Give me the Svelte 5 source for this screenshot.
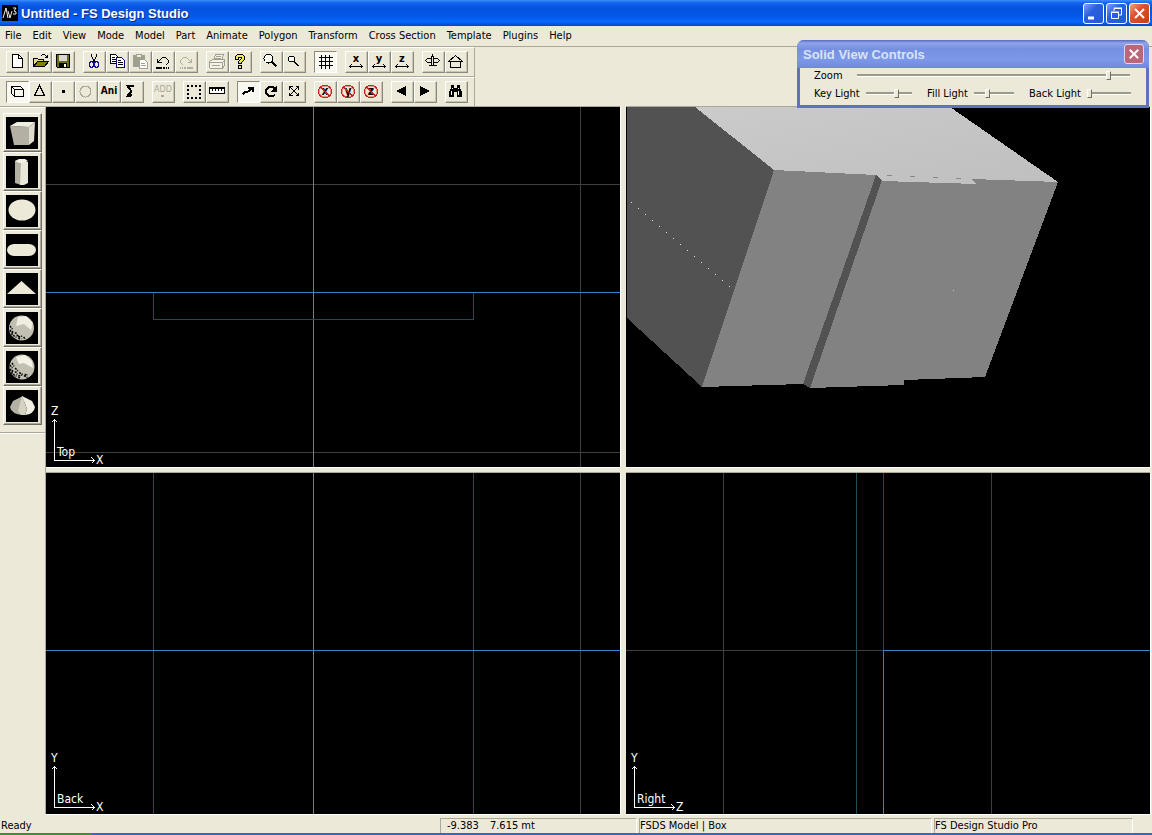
<script>
    const menus = ['File', 'Edit', 'View', 'Mode', 'Model', 'Part', 'Animate', 'Polygon', 'Transform', 'Cross Section', 'Template', 'Plugins', 'Help'];

    // body of each 21x20 toolbar icon
    const axis = (letter) => `<text x="10" y="10" text-anchor="middle" font-size="11" font-weight="bold">${letter}</text>
        <path d="M3.5 14.5H16.5M5.5 12.5L3.5 14.5L5.5 16.5M14.5 12.5L16.5 14.5L14.5 16.5"/>`;
    const lock = (letter) => `<g stroke="#e89890" stroke-width="2"><circle cx="10" cy="9.5" r="6"/></g>
        <text x="10" y="13" text-anchor="middle" font-size="12" font-weight="bold">${letter}</text>
        <g stroke="#c82020"><circle cx="10" cy="9.5" r="6.5"/><path d="M5.5 5L14.5 14"/></g>`;

    const icons = {
        new: '<path fill="#fff" d="M5.5 2.5H11.5L15.5 6.5V15.5H5.5Z"/><path d="M11.5 2.5V6.5H15.5"/>',
        open: '<path fill="#e8e080" d="M3.5 14.5V6.5H7.5L8.5 7.5H13.5V9.5"/><path fill="#808000" d="M3.5 14.5L7.5 9.5H18.5L14.5 14.5Z"/><path d="M10.5 4.5L12.5 2.5H14.5L17.5 5.5M17.5 2.5V5.5H14.5"/>',
        save: '<path fill="#6b6b18" d="M3.5 2.5H16.5V15.5H4.5L3.5 14.5Z"/><path fill="#d8d8cc" stroke="none" d="M6 3H14V9H6Z"/><path fill="#000" stroke="none" d="M6 11H14V16H6Z"/><path fill="#fff" stroke="none" d="M11 12H13V15H11Z"/>',
        cut: '<path d="M7.5 1.5V4.5L11.5 10.5M12.5 1.5V4.5L8.5 10.5"/><g stroke="#101090"><ellipse cx="7.5" cy="12.5" rx="2" ry="3"/><ellipse cx="12.5" cy="12.5" rx="2" ry="3"/></g>',
        copy: '<path fill="#fff" d="M3.5 2.5H8.5L10.5 4.5V11.5H3.5Z"/><path d="M5 5.5H8M5 7.5H9M5 9.5H9"/><path fill="#fff" stroke="#101070" d="M9.5 5.5H14.5L17.5 8.5V15.5H9.5Z"/><path d="M11 8.5H14M11 10.5H16M11 12.5H16"/>',
        paste: '<g stroke="#a09f90"><path fill="#a09f90" d="M3.5 3.5H14.5V14.5H3.5Z"/><path fill="#ece9d8" d="M6.5 2.5H11.5V5.5H6.5Z"/><path fill="#fff" d="M9.5 7.5H14.5L17.5 10.5V16.5H9.5Z"/><path d="M11 11.5H15M11 13.5H16"/></g>',
        undo: '<path d="M4.5 10.5L8.5 6.5L9.5 5.5H12.5L15.5 8.5V10.5L12.5 13.5M4.5 6.5V10.5H8.5" /><path stroke-width="2" d="M3 16H9M10 16H12M13 16H14M15 16H16"/>',
        redo: '<g stroke="#b0ae9e"><path d="M15.5 10.5L11.5 6.5L10.5 5.5H7.5L4.5 8.5V10.5L7.5 13.5M15.5 6.5V10.5H11.5"/><path stroke-width="2" d="M4 16H5M6 16H7M8 16H10M11 16H17"/></g>',
        print: '<g stroke="#a09f90" fill="#f4f2e6"><path d="M6.5 8.5L8.5 2.5H16.5L14.5 8.5"/><path d="M2.5 9.5L5.5 7.5H17.5V13.5L15.5 16.5H3.5L2.5 15.5Z"/><path d="M2.5 10.5H15.5V16M15.5 10.5L17.5 8.5M9 4.5H14M8 6.5H14M5 13.5H13"/></g>',
        help: '<path fill="#f0e850" d="M5.500 7.500V4.500L7.500 2.500H12.500L14.500 4.500V7.500L11.500 10.500V11.500H8.500V9.500L11.500 6.500V5.500H8.500V7.500Z"/><path fill="#f0e850" d="M8.500 13.500H11.500V16.500H8.500Z"/>',
        zoomIn: '<circle cx="7.500" cy="6.500" r="4.500" fill="#fbfaf2"/><path stroke-width="2" d="M11 10L15.500 14.500"/>',
        zoomOut: '<circle cx="7.500" cy="7" r="3" fill="#fbfaf2"/><path stroke-width="2" d="M10 9.500L14.500 14"/>',
        grid: '<path d="M6.500 3V17M10.500 3V17M14.500 3V17M4 5.500H18M4 9.500H18M4 13.500H18"/>',
        sizeX: axis('x'),
        sizeY: axis('y'),
        sizeZ: axis('z'),
        plane: '<path d="M8.500 4.500H10.500V13.500H8.500ZM9.500 2V5M8.500 6.500H4.500L2.500 8.500L4.500 10.500H8.500M10.500 6.500H14.500L16.500 8.500L14.500 10.500H10.500M5.500 13.500H13.500"/>',
        home: '<path d="M2.500 9.500L9.500 3.500L16.500 9.500ZM4.500 9.500V15.500H14.500V9.500"/>',
        box: '<path d="M4.500 4.500H13.500L16.500 7.500V14.500H7.500L4.500 11.500ZM4.500 4.500L7.500 7.500H16.500M7.500 7.500V14.500"/>',
        triangle: '<path d="M9.500 3.500L14.500 13.500H4.500Z"/>',
        point: '<path fill="#000" stroke="none" d="M9 8H12V11H9Z"/>',
        circle: '<circle cx="9.500" cy="9.500" r="5.500" stroke="#aaa998"/>',
        ani: '<text x="10" y="12" text-anchor="middle" font-size="10" font-weight="bold">Ani</text>',
        sigma: '<path stroke-width="2" d="M11 5V4H5.500L9 8.500V10L5.500 14H8L10 12.500"/>',
        add: '<g class="off"><text x="10" y="10" text-anchor="middle" font-size="9">ADD</text><path fill="#aaa998" stroke="none" d="M8 13H11V15H8Z"/></g>',
        marquee: '<path stroke-width="2" stroke-dasharray="2 2" d="M3 4H17M3 16H17M4 7V15M16 7V15"/>',
        ruler: '<path fill="#fff" d="M2.500 5.500H17.500V11.500H2.500Z"/><path d="M2 6.500H18M5.500 6V9M8.500 6V9M11.500 6V9M14.500 6V9"/>',
        move: '<path stroke-width="2" d="M4.500 12L8 9.500H10L14 7"/><path stroke-width="2" d="M10 6H15V10"/>',
        rotate: '<path stroke-width="2" d="M14 13L12 14H8L5 11V8L8 5H12L14 7"/><path fill="#000" d="M15.500 4.500V9.500H10.500Z"/>',
        scale: '<path d="M5.500 4.500L14.500 13.500M14.500 4.500L5.500 13.500M5.500 7.500V4.500H8.500M11.500 4.500H14.500V7.500M14.500 10.500V13.500H11.500M8.500 13.500H5.500V10.500"/>',
        lockX: lock('x'),
        lockY: lock('y'),
        lockZ: lock('z'),
        prev: '<path fill="#000" stroke="none" d="M4 9L14 4V14Z"/>',
        next: '<path fill="#000" stroke="none" d="M15 9L5 4V14Z"/>',
        find: '<path fill="#000" stroke="none" d="M5 3H8V6H11V3H14V6L16 10V15H11V10H8V15H3V10L5 6Z"/><path stroke="#fff" d="M5.500 9V13M12.500 9V13M6.500 6V7M12.500 6V7"/>'
    };

    const toolbars = [
        [['new', 'open', 'save'], ['cut', 'copy', 'paste', 'undo', 'redo'], ['print', 'help'], ['zoomIn', 'zoomOut'], ['grid'], ['sizeX', 'sizeY', 'sizeZ'], ['plane', 'home']],
        [['box', 'triangle', 'point', 'circle', 'ani', 'sigma'], ['add'], ['marquee', 'ruler'], ['move', 'rotate', 'scale'], ['lockX', 'lockY', 'lockZ'], ['prev', 'next'], ['find']]
    ];
    const pressed = ['grid', 'box', 'move'];
    const disabled = ['paste', 'redo', 'print', 'circle', 'add'];

    const shapes = [
        { name: 'Box', art: '<path fill="#b4b1a4" d="M4 9L23 10V28H8Z"/><path fill="#f0eee0" d="M4 9L11 5H29L23 10Z"/><path fill="#dedccc" d="M23 10L29 5L28 24L23 28Z"/>' },
        { name: 'Cylinder', art: '<path fill="#b4b1a4" d="M9 5L15 3V29L9 27Z"/><path fill="#eae8d8" d="M15 6H22V27L18 29H14Z"/><path fill="#f4f2e6" d="M9 5L13 3H19L22 5L18 7H13Z"/>' },
        { name: 'Sphere', art: '<ellipse fill="#ece9d8" cx="16" cy="15" rx="13.500" ry="10.500"/>' },
        { name: 'Tube', art: '<rect fill="#ece9d8" x="1" y="10" width="29" height="12" rx="7"/>' },
        { name: 'Pyramid', art: '<path fill="#ece9d8" d="M1 21L15.500 8L30 21Z"/>' },
        { name: 'Geosphere', art: '<circle fill="#c2c0b2" cx="15.500" cy="16" r="12.500"/><path fill="#f0eee0" d="M12 5L20 4L27 11L25 18L18 12L10 14Z"/><path stroke="#000" stroke-width="1.500" stroke-dasharray="2 1 1 2" fill="none" d="M4 14L7 18L6 22L10 21L12 25L17 24L19 27M4 18L8 24L14 27M11 23L16 27"/>' },
        { name: 'Hemisphere', art: '<circle fill="#c2c0b2" cx="16" cy="16" r="12.500"/><path fill="#f4f2e6" d="M10 6L19 4L26 10L27 17L18 12L13 13Z"/><path stroke="#000" stroke-width="1.500" stroke-dasharray="2 1 1 2" fill="none" d="M4 14L7 18L6 22L10 21L12 25L17 24L22 27M4 18L8 24L14 27M6 12L9 17L15 23L22 24"/>' },
        { name: 'Cone', art: '<path fill="#b4b1a4" d="M17 6L7 11L4 17Q5 24 17 25L19 20Z"/><path fill="#f0eee0" d="M16 6L26 11L29 17Q28 24 19 25L21 19Z"/><path fill="#d4d2c2" d="M16 6L21 19L19 25H15L12 21Z"/>' }
    ];

    const dots = Array.from({ length: 15 }, (_, i) => ({ x: 5 + i * 7, y: 95 + i * 6 }));

    let lights = $state([
        { name: 'Key Light', value: 68 },
        { name: 'Fill Light', value: 32 },
        { name: 'Back Light', value: 0 }
    ]);
    let zoom = $state(93);
</script>

{#snippet gizmo(label, up, across)}
    <svg class="gizmo" viewBox="0 0 60 64" width="60" height="64" shape-rendering="crispEdges">
        <path d="M5.500 57.500V16.500M2.500 19.500L5.500 16.500L8.500 19.500M5.500 57.500H45.500M42.500 54.500L45.500 57.500L42.500 60.500" />
        <text x="2" y="12">{up}</text>
        <text x="8" y="53">{label}</text>
        <text x="47" y="61">{across}</text>
    </svg>
{/snippet}

<div class="window">
    <header class="titlebar">
        <svg class="logo" viewBox="0 0 16 16" width="16" height="16">
            <rect width="16" height="16" fill="#000" />
            <path d="M1 13L4 3L6 13M6 6L8 13L10 6M11 3H14L12 6L14 7V9H11" stroke="#eee" fill="none" />
        </svg>
        <h1>Untitled - FS Design Studio</h1>
        <div class="caption">
            <button aria-label="Minimize"><svg viewBox="0 0 19 19"><path d="M4 14H10" stroke-width="3" /></svg></button>
            <button aria-label="Restore"><svg viewBox="0 0 19 19"><path d="M7 7V4.500H14.500V11H12M4.500 8.500H11.500V14.500H4.500ZM4 8H12M7 4H15" /></svg></button>
            <button class="close" aria-label="Close"><svg viewBox="0 0 19 19"><path d="M5 5L14 14M14 5L5 14" stroke-width="2" /></svg></button>
        </div>
    </header>

    <nav class="menubar">
        {#each menus as menu}
            <button>{menu}</button>
        {/each}
    </nav>

    {#each toolbars as groups}
        <div class="toolbar">
            {#each groups as group}
                <div class="group">
                    {#each group as name}
                        <button class:pressed={pressed.includes(name)} disabled={disabled.includes(name)} aria-label={name}>
                            <svg viewBox="0 0 21 20" width="21" height="20" shape-rendering="crispEdges">{@html icons[name]}</svg>
                        </button>
                    {/each}
                </div>
            {/each}
        </div>
    {/each}

    <main>
        <aside>
            <div class="palette">
                {#each shapes as shape}
                    <button aria-label={shape.name}>
                        <svg viewBox="0 0 32 32" width="32" height="32">{@html shape.art}</svg>
                    </button>
                {/each}
            </div>
        </aside>

        <div class="views">
            <section class="view">
                <svg class="scene" viewBox="0 0 574 360" preserveAspectRatio="xMinYMin slice" shape-rendering="crispEdges">
                    <path class="minor" d="M0 77.500H574M0 345.500H574M534.500 0V360" />
                    <path class="major" d="M267.500 0V360" />
                    <path class="model" d="M107.500 185V212.500H427.500V185" />
                    <path class="active" d="M0 185.500H574" />
                </svg>
                {@render gizmo('Top', 'Z', 'X')}
            </section>
            <section class="view">
                <svg class="scene" viewBox="0 0 524 360" preserveAspectRatio="xMinYMin slice">
                    <defs>
                        <linearGradient id="lid" x1="0" y1="0" x2="1" y2="1">
                            <stop offset="0" stop-color="#cbcbcb" />
                            <stop offset="1" stop-color="#bfbfbf" />
                        </linearGradient>
                    </defs>
                    <g shape-rendering="crispEdges">
                        <path fill="#525252" d="M1 0H69L148 63L76 280L1 211Z" />
                        <path fill="url(#lid)" d="M69 0H324L432 75L351 77L256 74L250 69L148 63Z" />
                        <path fill="#828282" d="M148 63L250 68L256 74L351 77L345 72L432 75L359 270L278 273V278L184 281L177 277L76 280Z" />
                        <path fill="#525252" d="M250 68L256 73L184 281L177 277Z" />
                        <path fill="#888" d="M261 68h5v1h-5zM284 69h5v1h-5zM307 70h5v1h-5zM330 71h5v1h-5z" />
                        {#each dots as dot}
                            <rect x={dot.x} y={dot.y} width="1" height="1" fill="#ddd" />
                        {/each}
                        <rect x="327" y="183" width="1" height="1" fill="#ccc" />
                    </g>
                </svg>
            </section>
            <section class="view">
                <svg class="scene" viewBox="0 0 574 341" preserveAspectRatio="xMinYMin slice" shape-rendering="crispEdges">
                    <path class="minor" d="M534.500 0V341" />
                    <path class="major" d="M267.500 0V341" />
                    <path class="model" d="M107.500 0V341M427.500 0V341" />
                    <path class="active" d="M0 177.500H574" />
                </svg>
                {@render gizmo('Back', 'Y', 'X')}
            </section>
            <section class="view">
                <svg class="scene" viewBox="0 0 524 341" preserveAspectRatio="xMinYMin slice" shape-rendering="crispEdges">
                    <path class="minor" d="M97.500 0V341M365.500 0V341M0 177.500H257" />
                    <path class="model" d="M230.500 0V341" />
                    <path class="far" d="M257.500 0V177" />
                    <path class="active" d="M257.500 341V177.500H524" />
                </svg>
                {@render gizmo('Right', 'Y', 'Z')}
            </section>
        </div>
    </main>

    <footer>
        <span class="ready">Ready</span>
        <span class="pane coords"><span>-9.383</span><span>7.615 mt</span></span>
        <span class="pane">FSDS Model | Box</span>
        <span class="pane">FS Design Studio Pro</span>
    </footer>
    <div class="taskbar"></div>

    <div class="panel">
        <div class="panel-title">
            <h2>Solid View Controls</h2>
            <button aria-label="Close"><svg viewBox="0 0 19 19"><path d="M5 5L14 14M14 5L5 14" stroke-width="2" /></svg></button>
        </div>
        <div class="controls">
            <div class="control">
                <label for="zoom">Zoom</label>
                <input id="zoom" type="range" bind:value={zoom}>
            </div>
            <div class="lights">
                {#each lights as light, i}
                    <div class="control">
                        <label for="light{i}">{light.name}</label>
                        <input id="light{i}" type="range" bind:value={light.value}>
                    </div>
                {/each}
            </div>
        </div>
    </div>
</div>

<style>
    :global(body) {
        background: #ece9d8;
    }
    .window {
        position: relative;
        min-height: 100vh;
        display: flex;
        flex-direction: column;
        font-family: Tahoma, "DejaVu Sans Condensed", "DejaVu Sans", sans-serif;
        font-size: 11px;
        color: #000;
        background: #ece9d8;
    }
    button {
        box-sizing: border-box;
        padding: 0;
        margin: 0;
        font: inherit;
        color: inherit;
        background: #ece9d8;
        border: 0;
    }
    h1, h2 {
        margin: 0;
        font-family: "Trebuchet MS", "Liberation Sans", sans-serif;
        font-size: 13px;
        font-weight: 700;
    }
    svg {
        display: block;
    }
    .titlebar {
        height: 26px;
        display: flex;
        align-items: center;
        gap: 3px;
        padding: 0 2px;
        background: linear-gradient(#3c8cf8 0, #1464ee 3px, #0453dc 8px, #0458e8 16px, #0468fc 22px, #0244c0 26px);
    }
    .titlebar h1 {
        flex: 1;
        color: #fff;
        text-shadow: 1px 1px #0a2a80;
    }
    .caption {
        display: flex;
        gap: 2px;
    }
    .caption button, .panel-title button {
        width: 21px;
        height: 21px;
        border: 1px solid #fff;
        border-radius: 3px;
        background: linear-gradient(135deg, #7ba4f4, #2c5fe0 40%, #2458dc);
    }
    .caption svg, .panel-title svg {
        width: 19px;
        height: 19px;
        fill: none;
        stroke: #fff;
    }
    .caption .close {
        background: linear-gradient(135deg, #f0a088, #e0502c 40%, #c83c14);
    }
    .menubar {
        box-sizing: border-box;
        height: 21px;
        display: flex;
        align-items: center;
        gap: 11px;
        padding: 0 5px 2px;
        border-bottom: 1px solid #aca899;
    }
    .toolbar {
        box-sizing: border-box;
        width: 475px;
        height: 30px;
        display: flex;
        gap: 8px;
        padding: 3px 6px 0;
        border-top: 1px solid #fff;
        border-right: 1px solid #aca899;
        border-bottom: 1px solid #aca899;
    }
    .group {
        display: flex;
    }
    .toolbar button {
        width: 23px;
        height: 22px;
        border: 1px solid;
        border-color: #fff #8c897a #8c897a #fff;
        box-shadow: inset -1px -1px #c8c5b4;
    }
    .toolbar button.pressed {
        background: #f8f7f0;
        border-color: #8c897a #fff #fff #8c897a;
        box-shadow: none;
    }
    .toolbar svg {
        fill: none;
        stroke: #000;
    }
    .toolbar svg :global(text) {
        fill: #000;
        stroke: none;
    }
    .toolbar svg :global(.off text) {
        fill: #aaa998;
    }
    main {
        flex: 1;
        display: flex;
    }
    aside {
        box-sizing: border-box;
        width: 46px;
        border-top: 1px solid #fff;
        border-right: 1px solid #aca899;
    }
    .palette {
        display: flex;
        flex-direction: column;
        padding: 5px 3px 7px;
        border-bottom: 1px solid #aca899;
        box-shadow: 0 1px #fff;
    }
    .palette button {
        width: 39px;
        height: 39px;
        border: 1px solid;
        border-color: #fff #716f64 #716f64 #fff;
        box-shadow: inset -1px -1px #aca899;
        padding: 2px;
    }
    .palette svg {
        background: #000;
    }
    .views {
        flex: 1;
        display: grid;
        grid-template-columns: 574fr 524fr;
        grid-template-rows: 360fr 341fr;
        gap: 6px;
        padding-right: 2px;
    }
    .view {
        position: relative;
        min-height: 200px;
        overflow: hidden;
        background: #000;
        box-shadow: 0 -1px #aca899, 0 1px #fff, 1px 0 #fff;
    }
    .scene {
        position: absolute;
        width: 100%;
        height: 100%;
        fill: none;
    }
    .minor {
        stroke: #3f3f3f;
    }
    .major {
        stroke: #7c7c7c;
    }
    .model {
        stroke: #1c5054;
    }
    .far {
        stroke: #154684;
    }
    .active {
        stroke: #3484c8;
    }
    .gizmo {
        position: absolute;
        left: 3px;
        bottom: 0;
        fill: none;
        stroke: #fff;
    }
    .gizmo text {
        fill: #fff;
        stroke: none;
        font-family: Tahoma, "DejaVu Sans Condensed", sans-serif;
        font-size: 12px;
    }
    footer {
        height: 19px;
        display: grid;
        grid-template-columns: 1fr 197px 293px 199px 17px;
        column-gap: 2px;
        align-items: end;
        line-height: 14px;
    }
    .ready {
        padding-left: 1px;
    }
    .pane {
        border: 1px solid;
        border-color: #aca899 #fff transparent #aca899;
        border-bottom: 0;
    }
    .coords {
        display: flex;
        gap: 11px;
        padding-left: 6px;
    }
    .taskbar {
        height: 2px;
        background: linear-gradient(90deg, #3c8c3c 92px, #3a62c8 92px);
    }
    .panel {
        position: absolute;
        top: 40px;
        right: 3px;
        box-sizing: border-box;
        width: 352px;
        border: 3px solid #6070c4;
        border-top: 0;
        border-radius: 7px 7px 0 0;
        background: #ece9d8;
    }
    .panel-title {
        height: 28px;
        display: flex;
        align-items: center;
        justify-content: space-between;
        margin: 0 -3px;
        padding: 0 5px 0 6px;
        border-radius: 7px 7px 0 0;
        background: linear-gradient(#5868c0 0, #8ea4ea 3px, #7690e0 9px, #7c98e8 20px, #7088dc);
    }
    .panel-title h2 {
        color: #d8e4f8;
    }
    .panel-title button {
        width: 20px;
        height: 20px;
        background: #b86878;
        border-color: #dcd8ec;
    }
    .panel-title button svg {
        width: 18px;
        height: 18px;
    }
    .controls {
        padding: 0 16px 5px 14px;
    }
    .control {
        height: 14px;
        display: flex;
        align-items: center;
    }
    .controls > .control {
        gap: 14px;
    }
    .lights {
        display: grid;
        grid-template-columns: 98px 87px 102px;
        column-gap: 15px;
        padding-top: 4px;
    }
    .lights .control {
        gap: 6px;
    }
    .control label {
        white-space: nowrap;
    }
    .control input {
        flex: 1;
        min-width: 0;
        height: 12px;
        margin: 0;
        appearance: none;
        background: linear-gradient(#9d9a8b 2px, #fff 2px) center / 100% 3px no-repeat;
    }
    .control input::-webkit-slider-thumb {
        appearance: none;
        box-sizing: border-box;
        width: 5px;
        height: 9px;
        background: #ece9d8;
        border: 1px solid;
        border-color: #fff #716f64 #716f64 #fff;
    }
</style>
